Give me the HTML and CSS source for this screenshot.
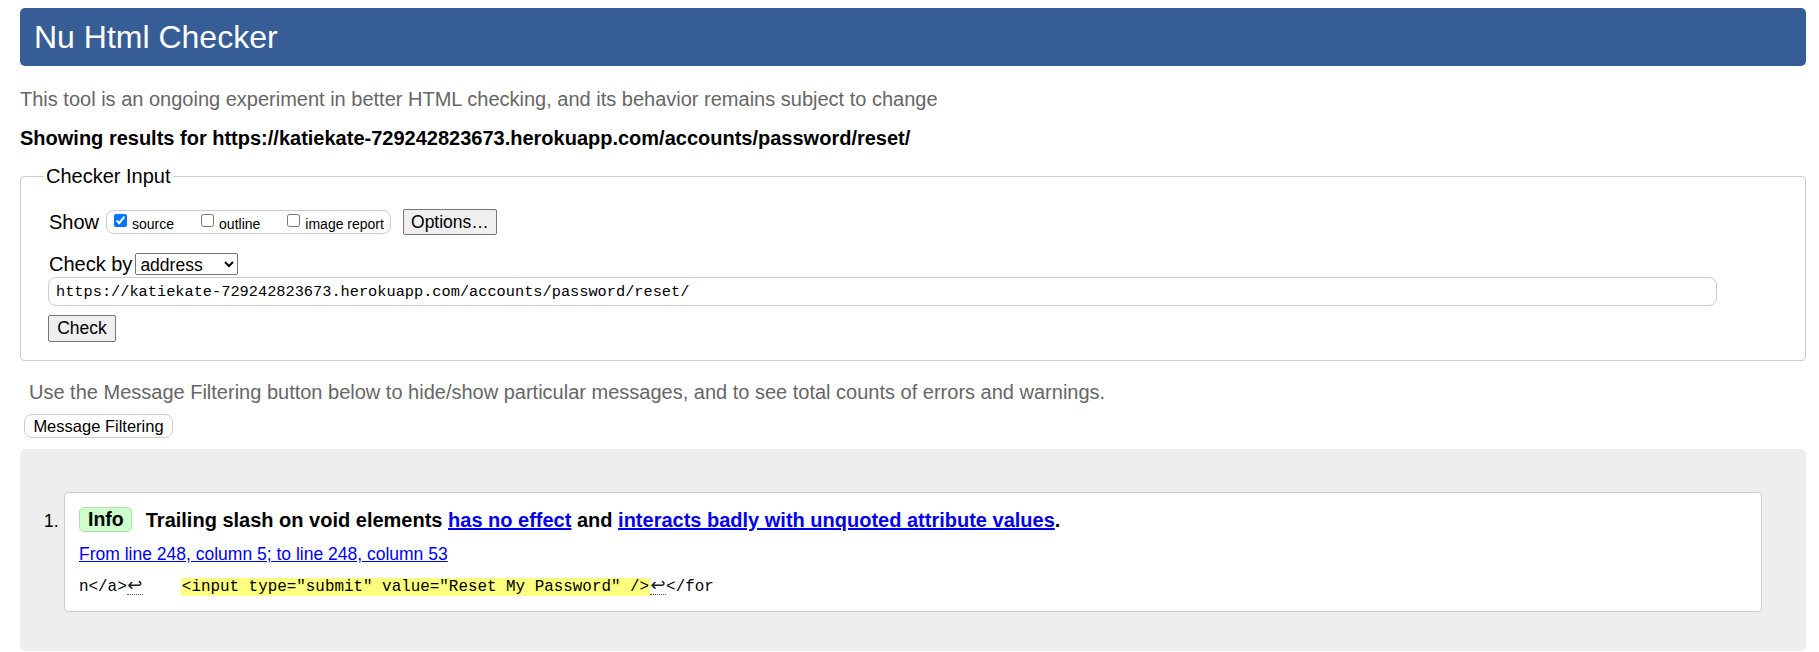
FILE: index.html
```html
<!DOCTYPE html>
<html lang="en">
<head>
<meta charset="utf-8">
<title>Showing results for https://katiekate-729242823673.herokuapp.com/accounts/password/reset/ - Nu Html Checker</title>
<link rel="stylesheet" href="styles.css">
</head>
<body>
<h1 class="site-title">Nu Html Checker</h1>
<p class="intro">This tool is an ongoing experiment in better HTML checking, and its behavior remains subject to change</p>
<p class="showing">Showing results for https://katiekate-729242823673.herokuapp.com/accounts/password/reset/</p>

<fieldset class="checker">
  <legend class="checker-legend">Checker Input</legend>
  <div class="row show-row">
    <span class="row-label">Show</span>
    <span class="opts">
      <label class="opt"><input type="checkbox" class="cb" checked><span>source</span></label>
      <label class="opt"><input type="checkbox" class="cb"><span>outline</span></label>
      <label class="opt"><input type="checkbox" class="cb"><span>image report</span></label>
    </span>
    <button class="btn options-btn" type="button">Options…</button>
  </div>
  <div class="row by-row">
    <span class="row-label">Check by</span>
    <select class="by-select"><option>address</option></select>
  </div>
  <input class="url-input" type="text" value="https://katiekate-729242823673.herokuapp.com/accounts/password/reset/">
  <div class="row check-row">
    <button class="btn check-btn" type="button">Check</button>
  </div>
</fieldset>

<p class="filter-note">Use the Message Filtering button below to hide/show particular messages, and to see total counts of errors and warnings.</p>
<button class="filter-btn" type="button">Message Filtering</button>

<div class="results">
  <div class="msg-item">
    <span class="msg-num">1.</span>
    <div class="msg-card">
      <p class="msg-title"><span class="badge">Info</span><span class="msg-text">Trailing slash on void elements <a href="#">has no effect</a> and <a href="#">interacts badly with unquoted attribute values</a>.</span></p>
      <p class="msg-loc"><a href="#">From line 248, column 5; to line 248, column 53</a></p>
      <p class="msg-code">n&lt;/a&gt;<span class="lf">↩</span>    <span class="hl">&lt;input type="submit" value="Reset My Password" /&gt;</span><span class="lf">↩</span>&lt;/for</p>
    </div>
  </div>
</div>
</body>
</html>
```
FILE: styles.css
```css
html, body {
  background: #fff;
}
body {
  margin: 8px 13px 0 20px;
  font-family: "Liberation Sans", Arial, sans-serif;
  font-size: 20px;
  color: #000;
}
p { margin: 0; }

.site-title {
  margin: 0;
  height: 58px;
  display: flex;
  align-items: center;
  padding: 0 14px;
  background: #365d95;
  color: #fff;
  font-size: 32px;
  font-weight: normal;
  border-radius: 5px;
}

.intro {
  margin-top: 22px;
  line-height: 23px;
  color: #666;
}
.showing {
  margin-top: 16px;
  line-height: 23px;
  font-weight: bold;
}

.checker {
  margin: 15px 0 0;
  padding: 0 28px 18px 28px;
  border: 1px solid #ccc;
  border-radius: 4px;
}
.checker-legend {
  padding: 0 2px;
  margin-left: -5px;
  line-height: 23px;
}
.row {
  display: flex;
  align-items: center;
}
.row-label {
  line-height: 23px;
}
.show-row {
  margin-top: 21px;
  height: 26px;
}
.opts {
  margin-left: 7px;
  display: flex;
  align-items: center;
  height: 22px;
  border: 1px solid #ccc;
  border-radius: 8px;
  padding: 0 6px 0 7px;
  font-size: 14px;
}
.opt {
  display: flex;
  align-items: center;
  margin-right: 27px;
}
.opt:last-child { margin-right: 0; }
.cb {
  width: 13px;
  height: 13px;
  margin: 0 5px 4px 0;
}
.opt span {
  position: relative;
  top: 2px;
}
.btn {
  font-family: "Liberation Sans", Arial, sans-serif;
  font-size: 17.5px;
  color: #000;
  background: #efefef;
  border: 1px solid #767676;
  border-radius: 2px;
  padding: 0;
}
.options-btn {
  margin-left: 12px;
  width: 94px;
  height: 26px;
}
.by-row {
  margin-top: 18px;
  height: 22px;
}
.by-select {
  margin-left: 3px;
  width: 103px;
  height: 22px;
  font-family: "Liberation Sans", Arial, sans-serif;
  font-size: 17.5px;
  color: #000;
}
.url-input {
  display: block;
  box-sizing: border-box;
  margin: 2px 0 0 -1px;
  width: 1669px;
  height: 29px;
  border: 1px solid #ccc;
  border-radius: 8px;
  padding: 0 7px;
  font-family: "Liberation Mono", "Courier New", monospace;
  font-size: 15.3px;
  color: #000;
  background: #fff;
}
.check-row {
  margin-top: 9px;
}
.check-btn {
  margin-left: -1px;
  width: 68px;
  height: 27px;
}

.filter-note {
  margin-top: 20px;
  padding-left: 9px;
  line-height: 23px;
  color: #666;
}
.filter-btn {
  display: block;
  margin: 10px 0 0 4px;
  width: 149px;
  height: 24px;
  padding: 0;
  background: #fff;
  border: 1px solid #ccc;
  border-radius: 8px;
  font-family: "Liberation Sans", Arial, sans-serif;
  font-size: 16.5px;
  color: #000;
}

.results {
  margin-top: 11px;
  background: #eee;
  border-radius: 5px;
  padding: 43px 44px 39px 24px;
}
.msg-item {
  display: flex;
  align-items: flex-start;
}
.msg-num {
  width: 20px;
  flex: none;
  font-size: 17.5px;
  line-height: 20px;
  margin-top: 19px;
}
.msg-card {
  flex: 1;
  background: #fff;
  border: 1px solid #ccc;
  border-radius: 4px;
  padding: 14px 14px 14px 14px;
}
.msg-title {
  display: flex;
  align-items: center;
  font-weight: bold;
}
.badge {
  box-sizing: border-box;
  height: 25px;
  padding: 0 7px 0 8px;
  display: inline-flex;
  align-items: center;
  background: #ccffcc;
  border: 1px solid #b6dcb6;
  border-radius: 5px;
  font-size: 19.5px;
  margin-right: 14px;
}
.msg-text {
  line-height: 23px;
  position: relative;
  top: 1px;
}
a {
  color: #0000ee;
  text-decoration: underline;
}
.msg-loc {
  margin-top: 12px;
  font-size: 17.5px;
  line-height: 21px;
}
.msg-code {
  margin-top: 11px;
  font-family: "Liberation Mono", "Courier New", monospace;
  font-size: 15.9px;
  line-height: 20px;
  white-space: pre;
}
.lf {
  display: inline-block;
  width: 16px;
  line-height: 18px;
  border-bottom: 1px dotted #555;
  font-family: "DejaVu Sans", sans-serif;
  font-size: 18px;
  text-align: center;
  color: #222;
}
.hl {
  background: #ffff80;
  padding: 0 1px;
}
```
